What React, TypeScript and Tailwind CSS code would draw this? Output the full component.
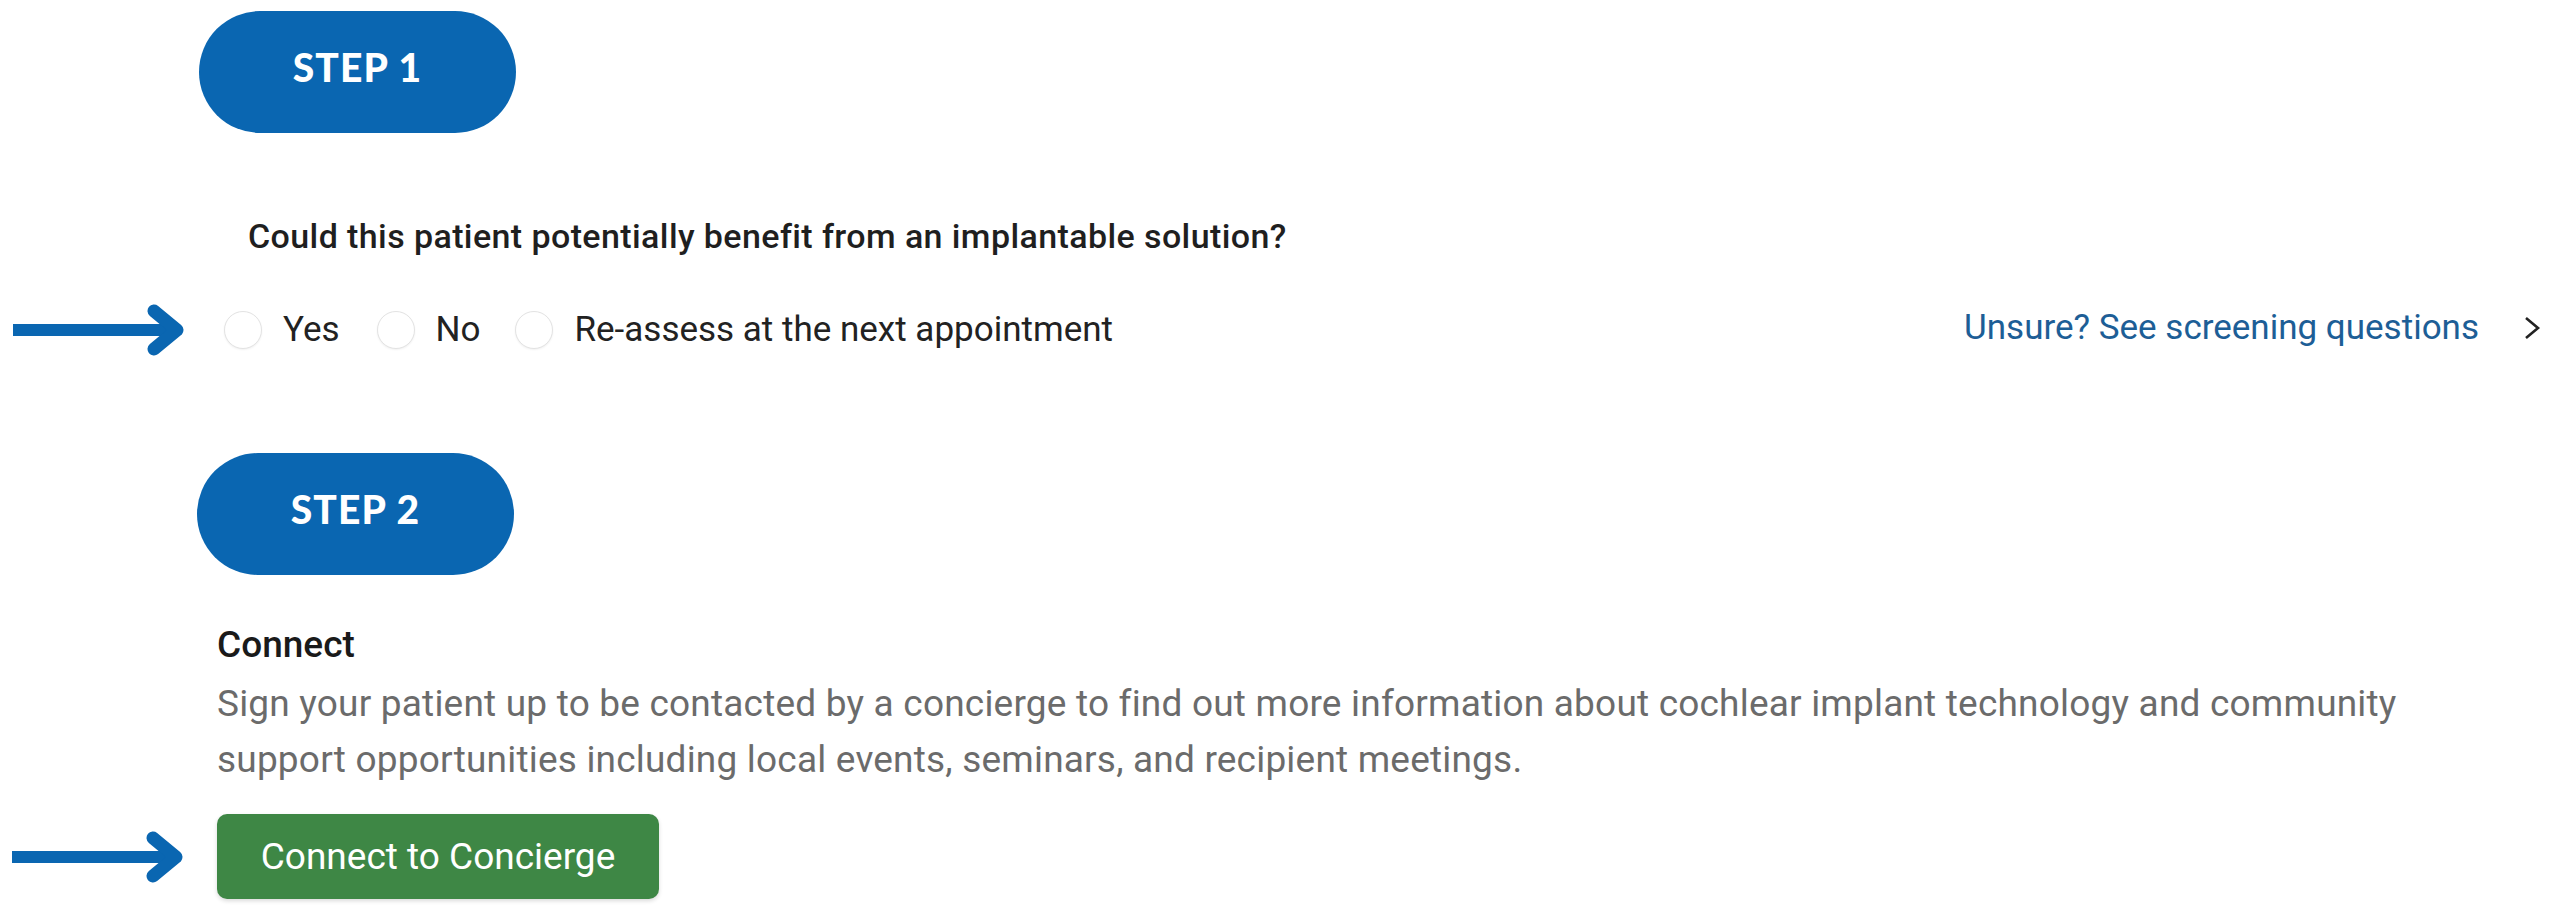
import React from "react";

function Arrow() {
  return (
    <svg width="172" height="52" viewBox="0 0 172 52" className="shrink-0">
      <line x1="0" y1="26" x2="163" y2="26" stroke="#0a66b1" strokeWidth="12" />
      <polyline
        points="141,7 164,26 141,45"
        fill="none"
        stroke="#0a66b1"
        strokeWidth="13"
        strokeLinecap="round"
        strokeLinejoin="round"
      />
    </svg>
  );
}

function Pill({ label }: { label: string }) {
  return (
    <div className="w-[317px] h-[122px] rounded-full bg-[#0a66b1] flex items-center justify-center pb-[10px]">
      <span className="text-white text-[39px] font-black tracking-[0.03em] font-['Lato',sans-serif]">
        {label}
      </span>
    </div>
  );
}

function Radio({ label, className = "" }: { label: string; className?: string }) {
  return (
    <label className={"flex items-center " + className}>
      <span className="w-[38px] h-[38px] rounded-full border border-[#e3e3e3] bg-white shadow-[0_1px_2px_rgba(0,0,0,0.06)] shrink-0" />
      <span className="ml-[21px] text-[35px] leading-[40px] text-[#222]">{label}</span>
    </label>
  );
}

export default function App() {
  return (
    <div className="w-[2560px] h-[924px] bg-white overflow-hidden font-['Roboto',sans-serif] flex flex-col">
      <div className="ml-[199px] mt-[11px]">
        <Pill label="STEP 1" />
      </div>

      <p className="ml-[248px] mt-[83px] text-[34px] leading-[40px] tracking-[0.4px] font-medium text-[#1f1f1f]">
        Could this patient potentially benefit from an implantable solution?
      </p>

      <div className="mt-[48px] flex items-center pl-[13px] pr-[19px]">
        <Arrow />
        <div className="ml-[39px] flex items-center">
          <Radio label="Yes" />
          <Radio label="No" className="ml-[37px]" />
          <Radio label="Re-assess at the next appointment" className="ml-[35px]" />
        </div>
        <a className="ml-auto flex items-center text-[35px] leading-[40px] text-[#1d5e96] -mt-[4px]">
          Unsure? See screening questions
          <svg width="18" height="24" viewBox="0 0 18 24" className="ml-[44px]">
            <polyline points="3,2 15,12 3,22" fill="none" stroke="#222" strokeWidth="2.6" />
          </svg>
        </a>
      </div>

      <div className="ml-[197px] mt-[97px]">
        <Pill label="STEP 2" />
      </div>

      <h3 className="ml-[217px] mt-[49px] text-[37px] leading-[42px] font-medium text-[#1a1a1a]">
        Connect
      </h3>
      <p className="ml-[217px] mt-[10px] text-[37px] leading-[56px] tracking-[0.2px] text-[#6b6b6b]">
        Sign your patient up to be contacted by a concierge to find out more information about cochlear implant technology and community
        <br />
        support opportunities including local events, seminars, and recipient meetings.
      </p>

      <div className="mt-[26px] flex items-center pl-[12px]">
        <Arrow />
        <button className="ml-[33px] w-[442px] h-[85px] rounded-[10px] bg-[#3e8745] text-white text-[37px] shadow-[0_2px_4px_rgba(0,0,0,0.15)]">
          Connect to Concierge
        </button>
      </div>
    </div>
  );
}
